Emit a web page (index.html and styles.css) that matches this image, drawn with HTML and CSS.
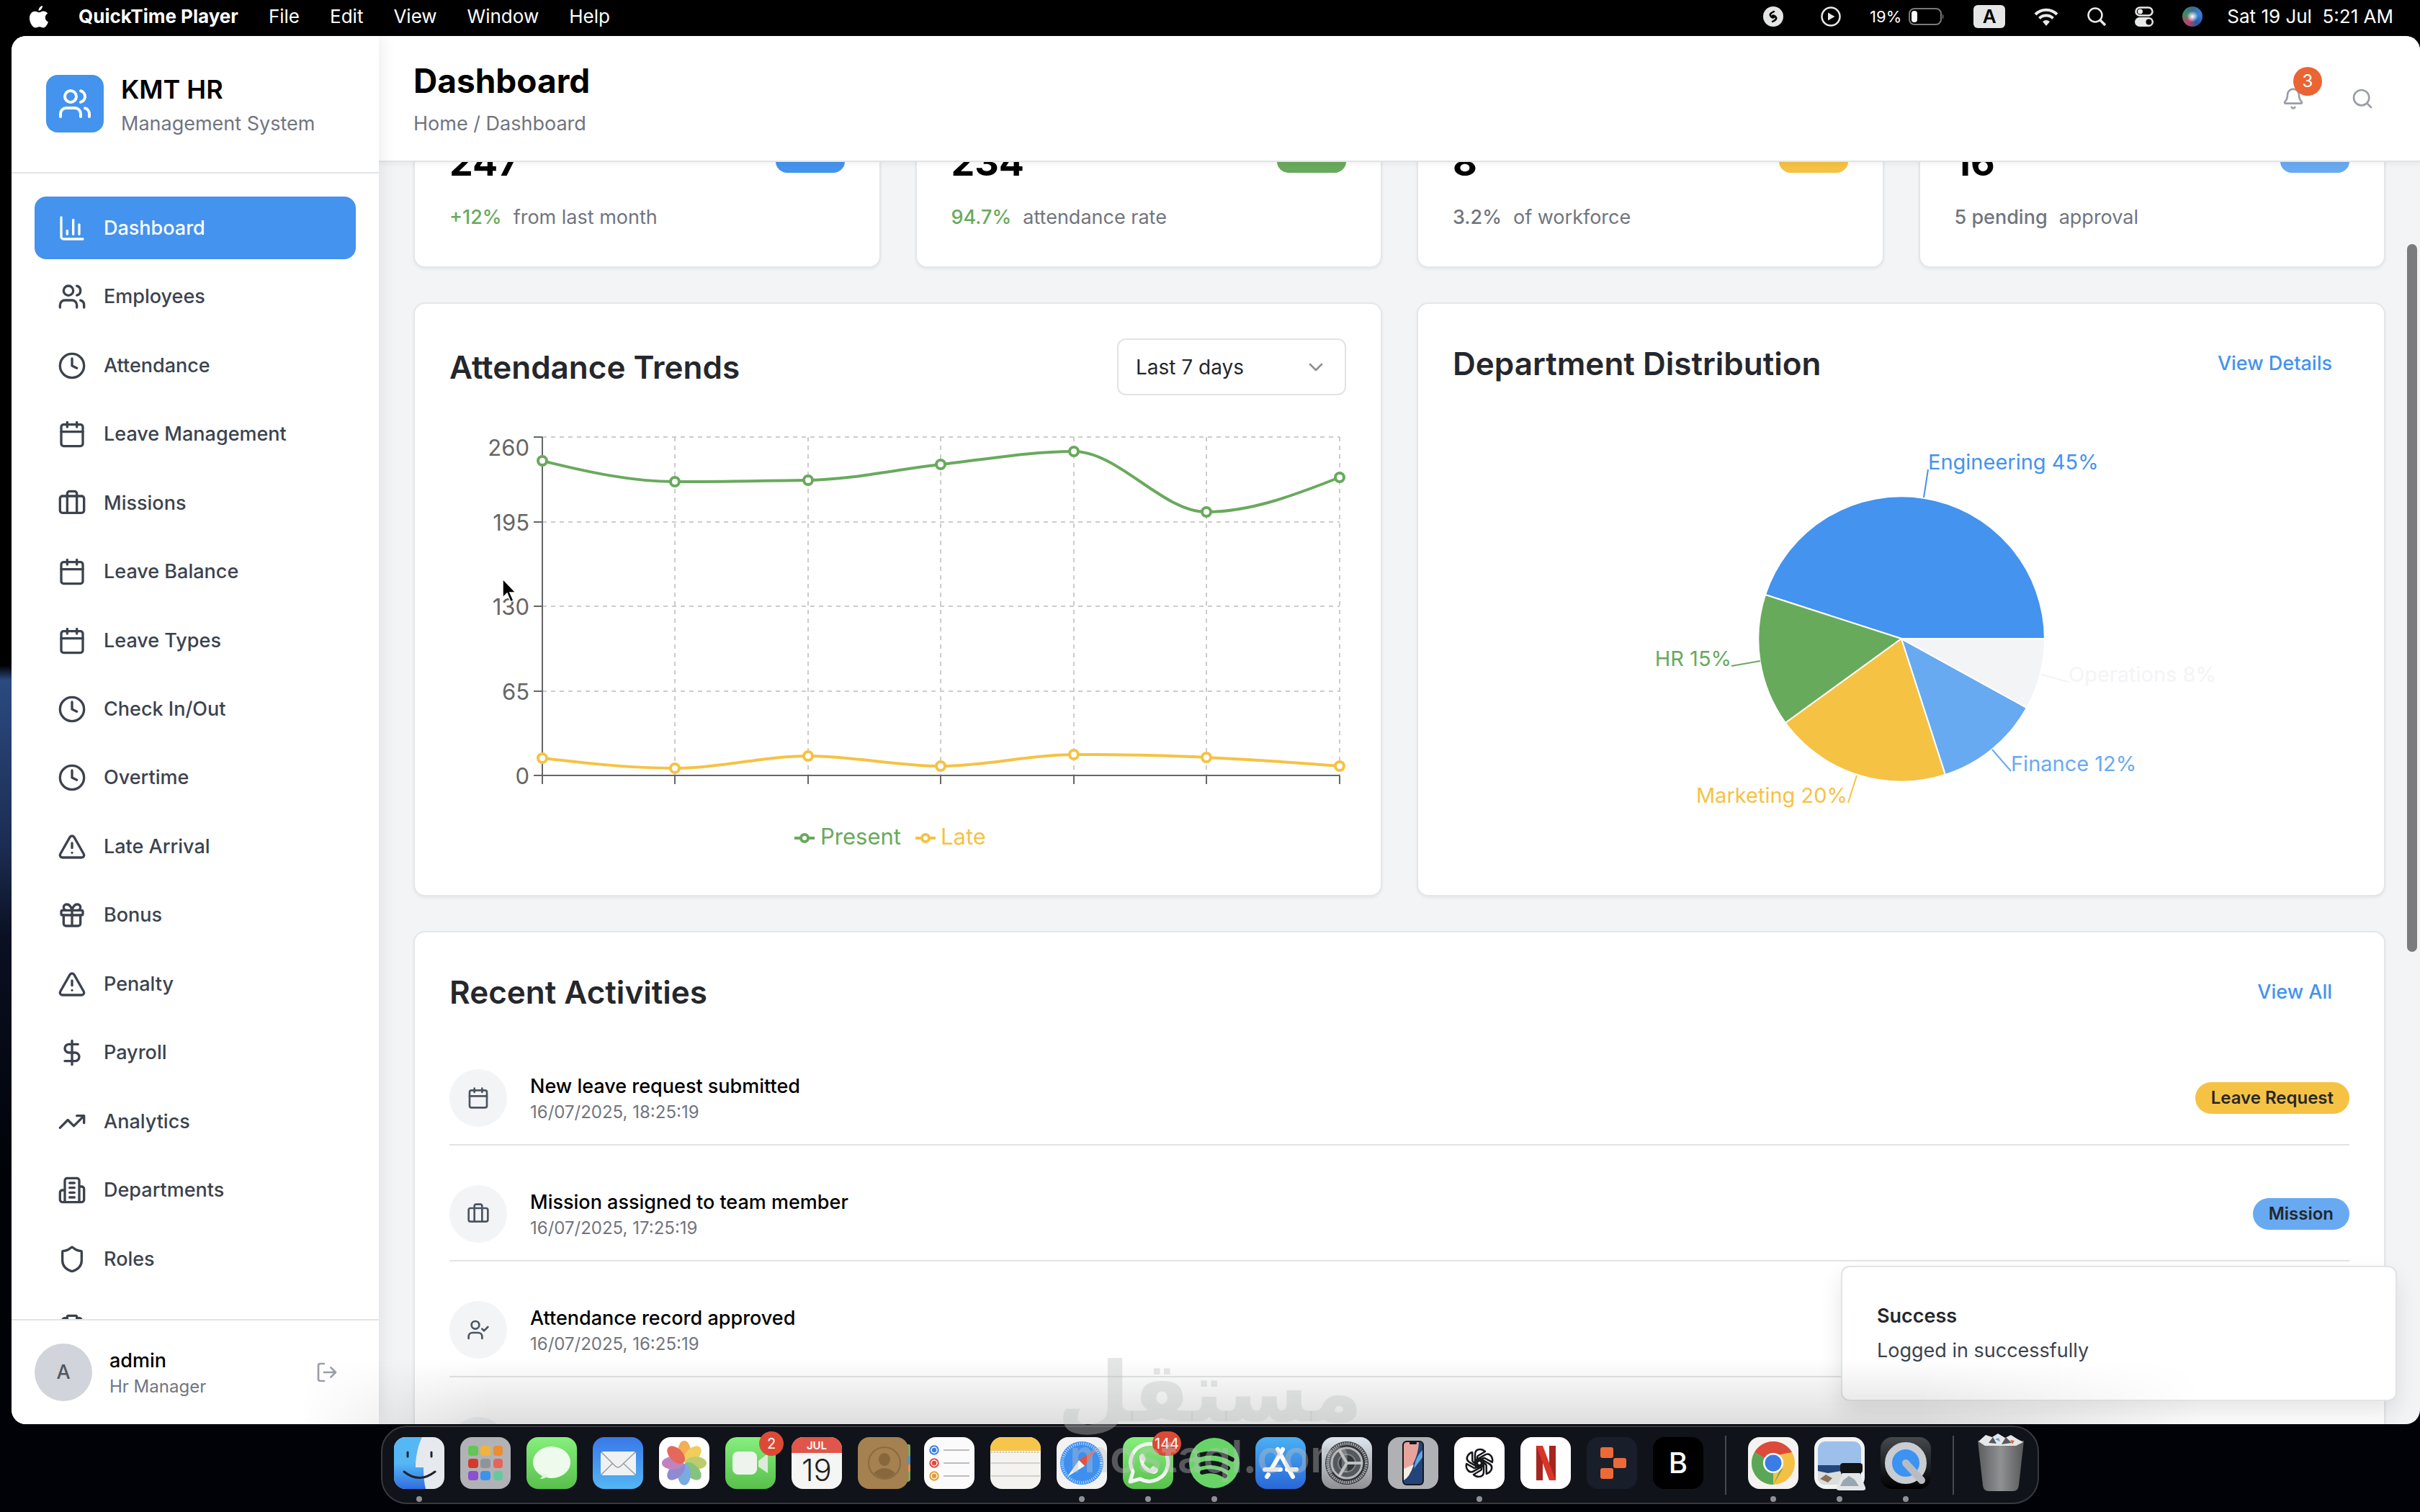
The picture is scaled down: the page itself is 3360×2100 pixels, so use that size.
FILE: index.html
```html
<!DOCTYPE html>
<html lang="en">
<head>
    <meta charset="UTF-8">
    <meta name="viewport" content="width=device-width, initial-scale=1.0">
    <title>KMT HR - Dashboard</title>
    <link rel="stylesheet" href="styles.css">
</head>
<body>
    <!-- Shared icon shapes -->
    <svg class="sprite" aria-hidden="true">
        <symbol id="i-users" viewBox="0 0 24 24"><path d="M16 21v-2a4 4 0 0 0-4-4H6a4 4 0 0 0-4 4v2"/><circle cx="9" cy="7" r="4"/><path d="M22 21v-2a4 4 0 0 0-3-3.87M16 3.13a4 4 0 0 1 0 7.75"/></symbol>
        <symbol id="i-chart" viewBox="0 0 24 24"><path d="M3 3v16a2 2 0 0 0 2 2h16M18 17V9M13 17V5M8 17v-3"/></symbol>
        <symbol id="i-clock" viewBox="0 0 24 24"><circle cx="12" cy="12" r="10"/><path d="M12 6v6l4 2"/></symbol>
        <symbol id="i-calendar" viewBox="0 0 24 24"><path d="M8 2v4M16 2v4"/><rect width="18" height="18" x="3" y="4" rx="2"/><path d="M3 10h18"/></symbol>
        <symbol id="i-luggage" viewBox="0 0 24 24"><path d="M16 20V4a2 2 0 0 0-2-2h-4a2 2 0 0 0-2 2v16"/><rect width="20" height="14" x="2" y="6" rx="2"/></symbol>
        <symbol id="i-alert" viewBox="0 0 24 24"><path d="m21.73 18-8-14a2 2 0 0 0-3.48 0l-8 14A2 2 0 0 0 4 21h16a2 2 0 0 0 1.73-3M12 9v4M12 17h.01"/></symbol>
        <symbol id="i-gift" viewBox="0 0 24 24"><rect x="3" y="8" width="18" height="4" rx="1"/><path d="M12 8v13M19 12v7a2 2 0 0 1-2 2H7a2 2 0 0 1-2-2v-7M7.5 8a2.5 2.5 0 0 1 0-5A4.800 8 0 0 1 12 8a4.800 8 0 0 1 4.500-5 2.500 2.500 0 0 1 0 5"/></symbol>
        <symbol id="i-dollar" viewBox="0 0 24 24"><path d="M12 2v20M17 5H9.500a3.500 3.500 0 0 0 0 7h5a3.500 3.500 0 0 1 0 7H6"/></symbol>
        <symbol id="i-trend" viewBox="0 0 24 24"><path d="m22 7-8.500 8.500-5-5L2 17M16 7h6v6"/></symbol>
        <symbol id="i-building" viewBox="0 0 24 24"><path d="M6 22V4a2 2 0 0 1 2-2h8a2 2 0 0 1 2 2v18ZM6 12H4a2 2 0 0 0-2 2v6a2 2 0 0 0 2 2h2M18 9h2a2 2 0 0 1 2 2v9a2 2 0 0 1-2 2h-2M10 6h4M10 10h4M10 14h4M10 18h4"/></symbol>
        <symbol id="i-shield" viewBox="0 0 24 24"><path d="M20 13c0 5-3.500 7.500-7.660 8.950a1 1 0 0 1-.670-.010C7.500 20.500 4 18 4 13V6a1 1 0 0 1 1-1c2 0 4.500-1.200 6.240-2.720a1.170 1.170 0 0 1 1.520 0C14.510 3.810 17 5 19 5a1 1 0 0 1 1 1z"/></symbol>
        <symbol id="i-clipboard" viewBox="0 0 24 24"><rect width="8" height="4" x="8" y="2" rx="1"/><path d="M16 4h2a2 2 0 0 1 2 2v14a2 2 0 0 1-2 2H6a2 2 0 0 1-2-2V6a2 2 0 0 1 2-2h2"/></symbol>
        <symbol id="i-logout" viewBox="0 0 24 24"><path d="M9 21H5a2 2 0 0 1-2-2V5a2 2 0 0 1 2-2h4M16 17l5-5-5-5M21 12H9"/></symbol>
        <symbol id="i-bell" viewBox="0 0 24 24"><path d="M10.270 21a2 2 0 0 0 3.460 0M3.260 15.330A1 1 0 0 0 4 17h16a1 1 0 0 0 .740-1.670C19.410 13.960 18 12.500 18 8A6 6 0 0 0 6 8c0 4.500-1.410 5.960-2.740 7.330"/></symbol>
        <symbol id="i-search" viewBox="0 0 24 24"><circle cx="11" cy="11" r="8"/><path d="m21 21-4.300-4.300"/></symbol>
        <symbol id="i-chevron" viewBox="0 0 24 24"><path d="m6 9 6 6 6-6"/></symbol>
        <symbol id="i-usercheck" viewBox="0 0 24 24"><path d="m16 11 2 2 4-4M16 21v-2a4 4 0 0 0-4-4H6a4 4 0 0 0-4 4v2"/><circle cx="9" cy="7" r="4"/></symbol>
    </svg>

    <header class="menubar">
        <div class="menubar-left">
            <svg width="26" height="31" viewBox="0 0 26 31" fill="#fff"><path d="M18 0c.3 3-2.300 6.800-5.400 6.900C12.300 3.800 15 .5 18 0ZM13.300 9.300C14.600 9.300 16.500 7.500 19 7.500c2.500 0 4.800 1.200 6.200 3.200-5 2.800-4.200 9.900.8 11.800-1.500 4-4 8-6.700 8-2 0-3-1.300-5.600-1.300-2.500 0-3.600 1.300-5.600 1.300C4.500 30.500 0 23.500 0 17.200 0 11 3.800 7.700 7.600 7.700c2.500 0 4.500 1.600 5.700 1.600Z"/></svg>
            <strong>QuickTime Player</strong>
            <span>File</span>
            <span>Edit</span>
            <span>View</span>
            <span>Window</span>
            <span>Help</span>
        </div>
        <div class="menubar-right">
            <svg class="shazam" width="28" height="28" viewBox="0 0 28 28"><circle cx="14" cy="14" r="14" fill="#e4e6e5"/><path d="M15 7c-4 2-7 4-4 7s5 1 4-1M13 21c4-2 7-4 4-7s-5-1-4 1" fill="none" stroke="#000" stroke-width="2.500" stroke-linecap="round"/></svg>
            <svg width="28" height="28" viewBox="0 0 28 28"><circle cx="14" cy="14" r="12.500" fill="none" stroke="#e8eae9" stroke-width="2.500"/><path d="M10 8.500v11l9.500-5.500z" fill="#e8eae9"/></svg>
            <span class="battery">19%
                <svg width="50" height="24" viewBox="0 0 50 24"><rect x="1" y="1" width="44" height="22" rx="7" fill="none" stroke="#78797c" stroke-width="2"/><rect x="4" y="4" width="8" height="16" rx="4" fill="#fff"/><path d="M47 8q3 4 0 8z" fill="#78797c"/></svg>
            </span>
            <span class="input-source">A</span>
            <svg width="34" height="25" viewBox="0 0 34 25" fill="none" stroke="#e8eae9" stroke-width="4"><path d="M2 9a21 21 0 0 1 30 0M7.500 14.500a13.500 13.500 0 0 1 19 0"/><path d="M17 25l-5-6a8 8 0 0 1 10 0z" fill="#e8eae9" stroke="none"/></svg>
            <svg width="26" height="26" viewBox="0 0 26 26" fill="none" stroke="#e8eae9" stroke-width="2.500"><circle cx="11" cy="11" r="9.500"/><path d="M18 18l7 7" stroke-width="3.500"/></svg>
            <svg width="26" height="28" viewBox="0 0 26 28"><rect x="1.500" y="1.500" width="23" height="11" rx="5.500" fill="none" stroke="#e8eae9" stroke-width="2.500"/><circle cx="7.500" cy="7" r="3.500" fill="#e8eae9"/><rect y="15" width="26" height="13" rx="6.500" fill="#e8eae9"/><circle cx="19.500" cy="21.500" r="4" fill="#000"/></svg>
            <span class="siri"></span>
            <span>Sat 19 Jul&nbsp; 5:21 AM</span>
        </div>
    </header>

    <div class="window">
        <aside class="sidebar">
            <div class="brand">
                <div class="brand-logo"><svg class="icon"><use href="#i-users"/></svg></div>
                <div>
                    <div class="brand-name">KMT HR</div>
                    <div class="muted">Management System</div>
                </div>
            </div>
            <nav>
                <ul>
                    <li><a class="active" href="#"><svg class="icon"><use href="#i-chart"/></svg>Dashboard</a></li>
                    <li><a href="#"><svg class="icon"><use href="#i-users"/></svg>Employees</a></li>
                    <li><a href="#"><svg class="icon"><use href="#i-clock"/></svg>Attendance</a></li>
                    <li><a href="#"><svg class="icon"><use href="#i-calendar"/></svg>Leave Management</a></li>
                    <li><a href="#"><svg class="icon"><use href="#i-luggage"/></svg>Missions</a></li>
                    <li><a href="#"><svg class="icon"><use href="#i-calendar"/></svg>Leave Balance</a></li>
                    <li><a href="#"><svg class="icon"><use href="#i-calendar"/></svg>Leave Types</a></li>
                    <li><a href="#"><svg class="icon"><use href="#i-clock"/></svg>Check In/Out</a></li>
                    <li><a href="#"><svg class="icon"><use href="#i-clock"/></svg>Overtime</a></li>
                    <li><a href="#"><svg class="icon"><use href="#i-alert"/></svg>Late Arrival</a></li>
                    <li><a href="#"><svg class="icon"><use href="#i-gift"/></svg>Bonus</a></li>
                    <li><a href="#"><svg class="icon"><use href="#i-alert"/></svg>Penalty</a></li>
                    <li><a href="#"><svg class="icon"><use href="#i-dollar"/></svg>Payroll</a></li>
                    <li><a href="#"><svg class="icon"><use href="#i-trend"/></svg>Analytics</a></li>
                    <li><a href="#"><svg class="icon"><use href="#i-building"/></svg>Departments</a></li>
                    <li><a href="#"><svg class="icon"><use href="#i-shield"/></svg>Roles</a></li>
                    <li><a href="#"><svg class="icon"><use href="#i-clipboard"/></svg></a></li>
                </ul>
            </nav>
            <div class="user">
                <div class="avatar">A</div>
                <div class="user-info">
                    <div class="user-name">admin</div>
                    <div class="small muted">Hr Manager</div>
                </div>
                <button class="icon-btn" aria-label="Log out"><svg class="icon icon-sm"><use href="#i-logout"/></svg></button>
            </div>
        </aside>

        <main>
            <div class="topbar">
                <div>
                    <h1>Dashboard</h1>
                    <div class="muted">Home / Dashboard</div>
                </div>
                <div class="topbar-actions">
                    <button class="icon-btn" aria-label="Notifications"><svg class="icon icon-sm"><use href="#i-bell"/></svg><span class="count">3</span></button>
                    <button class="icon-btn" aria-label="Search"><svg class="icon icon-sm"><use href="#i-search"/></svg></button>
                </div>
            </div>

            <div class="scroll-area">
                <div class="content">
                    <section class="stats">
                        <div class="card">
                            <div class="stat-top"><span class="stat-value">247</span><span class="stat-icon blue"></span></div>
                            <div class="stat-note"><b class="green-text">+12%</b><span>from last month</span></div>
                        </div>
                        <div class="card">
                            <div class="stat-top"><span class="stat-value">234</span><span class="stat-icon green"></span></div>
                            <div class="stat-note"><b class="green-text">94.7%</b><span>attendance rate</span></div>
                        </div>
                        <div class="card">
                            <div class="stat-top"><span class="stat-value">8</span><span class="stat-icon yellow"></span></div>
                            <div class="stat-note"><b>3.2%</b><span>of workforce</span></div>
                        </div>
                        <div class="card">
                            <div class="stat-top"><span class="stat-value">16</span><span class="stat-icon sky"></span></div>
                            <div class="stat-note"><b>5 pending</b><span>approval</span></div>
                        </div>
                    </section>

                    <section class="charts">
                        <div class="card">
                            <div class="card-head">
                                <h2>Attendance Trends</h2>
                                <div class="select-wrap">
                                    <select aria-label="Period"><option>Last 7 days</option></select>
                                    <svg class="icon icon-sm"><use href="#i-chevron"/></svg>
                                </div>
                            </div>
                            <svg class="chart" viewBox="0 0 1245 598">
                                <g stroke="#ccc" stroke-width="2" stroke-dasharray="6 6">
                                    <path d="M129 10H1236M129 128H1236M129 245H1236M129 363H1236"/>
                                    <path d="M313 10V480M498 10V480M682 10V480M867 10V480M1051 10V480M1236 10V480"/>
                                </g>
                                <path d="M129 10V480H1236M117 10h12M117 128h12M117 245h12M117 363h12M117 480h12M129 480v12M313 480v12M498 480v12M682 480v12M867 480v12M1051 480v12M1236 480v12" fill="none" stroke="#666" stroke-width="2"/>
                                <g class="axis-labels">
                                    <text x="111" y="36">260</text>
                                    <text x="111" y="140">195</text>
                                    <text x="111" y="257">130</text>
                                    <text x="111" y="375">65</text>
                                    <text x="111" y="492">0</text>
                                </g>
                                <g fill="none" stroke="#68aa5c" stroke-width="4">
                                    <path d="M129 43C190 58 252 72 313 72C375 72 436 71 498 70C559 69 621 55 682 48C744 41 806 30 867 30C929 30 990 114 1051 114C1113 114 1175 90 1236 66"/>
                                    <g fill="#fff"><circle cx="129" cy="43" r="6"/><circle cx="313" cy="72" r="6"/><circle cx="498" cy="70" r="6"/><circle cx="682" cy="48" r="6"/><circle cx="867" cy="30" r="6"/><circle cx="1051" cy="114" r="6"/><circle cx="1236" cy="66" r="6"/></g>
                                    <path d="M479 567h28"/><circle cx="493" cy="567" r="5" fill="#fff"/>
                                </g>
                                <g fill="none" stroke="#f6c244" stroke-width="4">
                                    <path d="M129 456C190 463 252 470 313 470C375 470 436 453 498 453C559 453 621 467 682 467C744 467 806 451 867 451C929 451 990 452 1051 455C1113 458 1175 462 1236 467"/>
                                    <g fill="#fff"><circle cx="129" cy="456" r="6"/><circle cx="313" cy="470" r="6"/><circle cx="498" cy="453" r="6"/><circle cx="682" cy="467" r="6"/><circle cx="867" cy="451" r="6"/><circle cx="1051" cy="455" r="6"/><circle cx="1236" cy="467" r="6"/></g>
                                    <path d="M647 567h28"/><circle cx="661" cy="567" r="5" fill="#fff"/>
                                </g>
                                <text x="515" y="576" fill="#68aa5c">Present</text>
                                <text x="682" y="576" fill="#f6c244">Late</text>
                            </svg>
                        </div>

                        <div class="card">
                            <div class="card-head">
                                <h2>Department Distribution</h2>
                                <button class="link-btn">View Details</button>
                            </div>
                            <svg class="chart pie" viewBox="0 0 1245 598">
                                <g stroke="#fff" stroke-width="2" stroke-linejoin="round">
                                    <path d="M623 299L822 299A199 199 0 0 0 434 238Z" fill="#4493ee"/>
                                    <path d="M623 299L434 238A199 199 0 0 0 462 416Z" fill="#68aa5c"/>
                                    <path d="M623 299L462 416A199 199 0 0 0 684 488Z" fill="#f6c244"/>
                                    <path d="M623 299L684 488A199 199 0 0 0 797 395Z" fill="#68aaf1"/>
                                    <path d="M623 299L797 395A199 199 0 0 0 822 299Z" fill="#f3f4f6"/>
                                </g>
                                <g fill="none" stroke-width="2">
                                    <path d="M654 103L660 64" stroke="#4493ee"/>
                                    <path d="M427 330L387 337" stroke="#68aa5c"/>
                                    <path d="M561 489L549 527" stroke="#f6c244"/>
                                    <path d="M749 453L775 483" stroke="#68aaf1"/>
                                    <path d="M817 349L855 359" stroke="#f3f4f6"/>
                                </g>
                                <text x="660" y="64" fill="#4493ee">Engineering 45%</text>
                                <text x="387" y="337" fill="#68aa5c" text-anchor="end">HR 15%</text>
                                <text x="548" y="527" fill="#f6c244" text-anchor="end">Marketing 20%</text>
                                <text x="775" y="483" fill="#68aaf1">Finance 12%</text>
                                <text x="855" y="359" fill="#f3f4f6">Operations 8%</text>
                            </svg>
                        </div>
                    </section>

                    <section class="card">
                        <div class="card-head">
                            <h2>Recent Activities</h2>
                            <button class="link-btn">View All</button>
                        </div>
                        <ul class="activities">
                            <li>
                                <span class="activity-icon"><svg class="icon icon-sm"><use href="#i-calendar"/></svg></span>
                                <div><div class="activity-title">New leave request submitted</div><div class="small muted">16/07/2025, 18:25:19</div></div>
                                <span class="tag yellow">Leave Request</span>
                            </li>
                            <li>
                                <span class="activity-icon"><svg class="icon icon-sm"><use href="#i-luggage"/></svg></span>
                                <div><div class="activity-title">Mission assigned to team member</div><div class="small muted">16/07/2025, 17:25:19</div></div>
                                <span class="tag sky">Mission</span>
                            </li>
                            <li>
                                <span class="activity-icon"><svg class="icon icon-sm"><use href="#i-usercheck"/></svg></span>
                                <div><div class="activity-title">Attendance record approved</div><div class="small muted">16/07/2025, 16:25:19</div></div>
                            </li>
                            <li>
                                <span class="activity-icon"></span>
                            </li>
                        </ul>
                    </section>
                </div>
            </div>
        </main>

        <span class="scroll-thumb"></span>
        <div class="toast" role="status">
            <div class="toast-title">Success</div>
            <div>Logged in successfully</div>
        </div>
        <div class="dock-shade"></div>
    </div>

    <footer class="dock-area">
        <div class="dock">
            <!-- Finder -->
            <span class="app running"><svg viewBox="0 0 70 72"><defs><linearGradient id="g-finder" x2="0" y2="1"><stop offset=".5" stop-color="#55b8f5"/><stop offset="1" stop-color="#2f6de0"/></linearGradient><clipPath id="c-app"><rect width="70" height="72" rx="16"/></clipPath></defs><g clip-path="url(#c-app)"><rect width="70" height="72" fill="#e6e9ee"/><path d="M0 0h39c-6 12-9 28-9 42h11c0 12 1 22 3 30H0z" fill="url(#g-finder)"/></g><path d="M19 21v6M52 21v6M14 48q21 17 43 0" fill="none" stroke="#1d2430" stroke-width="3" stroke-linecap="round"/></svg></span>
            <!-- Launchpad -->
            <span class="app"><svg viewBox="0 0 70 72"><rect width="70" height="72" rx="16" fill="#b1b2b6"/><g><rect x="11" y="12" width="14" height="14" rx="4" fill="#62c654"/><rect x="28" y="12" width="14" height="14" rx="4" fill="#f2b33c"/><rect x="46" y="12" width="13" height="14" rx="4" fill="#ee8c32"/><rect x="11" y="30" width="14" height="13" rx="4" fill="#d43a2b"/><rect x="28" y="30" width="14" height="13" rx="4" fill="#8f9499"/><rect x="46" y="30" width="13" height="13" rx="4" fill="#e5645a"/><rect x="11" y="47" width="14" height="13" rx="4" fill="#8c4fd0"/><rect x="28" y="47" width="14" height="13" rx="4" fill="#3a94ec"/><rect x="46" y="47" width="13" height="13" rx="4" fill="#66c99b"/></g></svg></span>
            <!-- Messages -->
            <span class="app"><svg viewBox="0 0 70 72"><defs><linearGradient id="g-green" x2="0" y2="1"><stop stop-color="#86ef7d"/><stop offset="1" stop-color="#58c04b"/></linearGradient></defs><rect width="70" height="72" rx="16" fill="url(#g-green)"/><ellipse cx="35" cy="35" rx="26" ry="22" fill="#eefaec"/><path d="M22 50q1 6-4 8 8 0 13-5z" fill="#e2f5df"/></svg></span>
            <!-- Mail -->
            <span class="app"><svg viewBox="0 0 70 72"><defs><linearGradient id="g-mail" x2="0" y2="1"><stop stop-color="#3a78e8"/><stop offset="1" stop-color="#54b6f4"/></linearGradient></defs><rect width="70" height="72" rx="16" fill="url(#g-mail)"/><rect x="11" y="20" width="49" height="33" rx="4" fill="#f0f1f2"/><path d="M12 21l19 19q4 4 8 0l20-19M12 52l15-15M59 52L43 37" fill="none" stroke="#9a9da1" stroke-width="1.500"/></svg></span>
            <!-- Photos -->
            <span class="app"><svg viewBox="0 0 70 72"><rect width="70" height="72" rx="16" fill="#fff"/><g opacity=".86"><ellipse cx="35" cy="20" rx="9" ry="15" fill="#f0a33a"/><ellipse cx="35" cy="20" rx="9" ry="15" fill="#efc542" transform="rotate(45 35 36)"/><ellipse cx="35" cy="20" rx="9" ry="15" fill="#b3c455" transform="rotate(90 35 36)"/><ellipse cx="35" cy="20" rx="9" ry="15" fill="#74b867" transform="rotate(135 35 36)"/><ellipse cx="35" cy="20" rx="9" ry="15" fill="#639fdc" transform="rotate(180 35 36)"/><ellipse cx="35" cy="20" rx="9" ry="15" fill="#7e77c9" transform="rotate(225 35 36)"/><ellipse cx="35" cy="20" rx="9" ry="15" fill="#b66fb4" transform="rotate(270 35 36)"/><ellipse cx="35" cy="20" rx="9" ry="15" fill="#e1503f" transform="rotate(315 35 36)"/></g></svg></span>
            <!-- FaceTime -->
            <span class="app"><svg viewBox="0 0 70 72"><rect width="70" height="72" rx="16" fill="url(#g-green)"/><rect x="10" y="20" width="34" height="32" rx="8" fill="#eef4ed"/><path d="M46 33l13-10v27L46 41z" fill="#dcebd9"/></svg><span class="app-badge">2</span></span>
            <!-- Calendar -->
            <span class="app"><svg viewBox="0 0 70 72"><g clip-path="url(#c-app)"><rect width="70" height="72" fill="#f5f5f3"/><rect width="70" height="22" fill="#e0564a"/></g><text x="35" y="17" class="cal-month">JUL</text><text x="35" y="61" class="cal-day">19</text></svg></span>
            <!-- Contacts -->
            <span class="app"><svg viewBox="0 0 70 72"><path d="M60 10h11q2 0 2 3v45q0 4-4 4h-9z" fill="#7fa85c"/><path d="M60 26h13v12H60z" fill="#4b93d8"/><path d="M60 38h13v10H60z" fill="#e5923a"/><rect width="70" height="72" rx="16" fill="#a58050"/><circle cx="37" cy="36" r="22" fill="none" stroke="#8b6a3e" stroke-width="2"/><ellipse cx="37" cy="31" rx="8" ry="9" fill="#87673c"/><path d="M22 50q15-14 30 0-15 14-30 0" fill="#87673c"/></svg></span>
            <!-- Reminders -->
            <span class="app"><svg viewBox="0 0 70 72"><rect width="70" height="72" rx="16" fill="#fbfbfb"/><g stroke-width="1.500"><circle cx="14" cy="18" r="6" fill="#3a7de8" stroke="#3a7de8"/><circle cx="14" cy="36" r="6" fill="#e2483d" stroke="#e2483d"/><circle cx="14" cy="54" r="6" fill="#e79a34" stroke="#e79a34"/></g><g fill="none" stroke="#fff" stroke-width="1.500"><circle cx="14" cy="18" r="4"/><circle cx="14" cy="36" r="4"/><circle cx="14" cy="54" r="4"/></g><path d="M27 18h36M27 36h36M27 54h36" stroke="#bdbdbf" stroke-width="2"/></svg></span>
            <!-- Notes -->
            <span class="app"><svg viewBox="0 0 70 72"><g clip-path="url(#c-app)"><rect width="70" height="72" fill="#f4f3ef"/><rect width="70" height="19" fill="#f5c64b"/></g><path d="M1 21h68" stroke="#c9c5b8" stroke-width="2" stroke-dasharray="2 2"/><path d="M1 36h68M1 54h68" stroke="#d2d1cd" stroke-width="2"/></svg></span>
            <!-- Safari -->
            <span class="app running"><svg viewBox="0 0 70 72"><rect width="70" height="72" rx="16" fill="#f2f2f3"/><circle cx="35" cy="36" r="30" fill="#3d8ff0"/><circle cx="35" cy="36" r="27" fill="none" stroke="#cfe4fb" stroke-width="4" stroke-dasharray="1 2"/><path d="M55 17L31 32l8 8z" fill="#e5523d"/><path d="M15 55l16-23 8 8z" fill="#f5f5f5"/></svg></span>
            <!-- WhatsApp -->
            <span class="app running"><svg viewBox="0 0 70 72"><rect width="70" height="72" rx="16" fill="url(#g-green)"/><path d="M10 62l4-14a26 26 0 1 1 10 10z" fill="none" stroke="#f4f6f4" stroke-width="5" stroke-linejoin="round"/><path d="M23 26q3-5 6-2l3 7-3 5q3 6 9 8l4-4 7 4q0 6-6 7-20-3-20-25" fill="#f4f6f4"/></svg><span class="app-badge">144</span></span>
            <!-- Spotify -->
            <span class="app running"><svg viewBox="0 0 70 72"><circle cx="35" cy="36" r="35" fill="#68d468"/><path d="M14 25q24-7 46 6M16 38q20-6 38 5M18 49q17-5 32 5" fill="none" stroke="#15171b" stroke-width="6" stroke-linecap="round"/></svg></span>
            <!-- App Store -->
            <span class="app"><svg viewBox="0 0 70 72"><defs><linearGradient id="g-store" x2="0" y2="1"><stop stop-color="#4bb0f3"/><stop offset="1" stop-color="#2a67d8"/></linearGradient></defs><rect width="70" height="72" rx="16" fill="url(#g-store)"/><path d="M31 17l21 38M38 17L22 45M13 45h22M44 45h13M18 52l-2 3" fill="none" stroke="#fff" stroke-width="6" stroke-linecap="round"/></svg></span>
            <!-- Settings -->
            <span class="app"><svg viewBox="0 0 70 72"><defs><linearGradient id="g-set" x2="0" y2="1"><stop stop-color="#dde6ee"/><stop offset="1" stop-color="#8f8f93"/></linearGradient></defs><rect width="70" height="72" rx="16" fill="url(#g-set)"/><circle cx="35" cy="36" r="30" fill="#2f3236"/><circle cx="35" cy="36" r="27" fill="none" stroke="#9da0a4" stroke-width="4" stroke-dasharray="2 1"/><circle cx="35" cy="36" r="21" fill="#55585c" stroke="#b4b6b9" stroke-width="3"/><circle cx="35" cy="36" r="12" fill="#33363a" stroke="#7e8185" stroke-width="2"/><path d="M35 36h22M35 36L24 17M35 36L24 55" stroke="#bfc1c4" stroke-width="4"/></svg></span>
            <!-- iPhone Mirroring -->
            <span class="app"><svg viewBox="0 0 70 72"><rect width="70" height="72" rx="16" fill="#b0b1b5"/><rect x="20" y="5" width="30" height="62" rx="6" fill="#16181d"/><rect x="22" y="7" width="26" height="58" rx="4" fill="#234478"/><path d="M22 12q0-5 5-5h16q-1 26-21 50z" fill="#e8a39c"/><path d="M48 18Q38 28 36 44L48 28z" fill="#5fa6ea"/><path d="M22 44l14-6q-6 18-14 22z" fill="#f6efe6"/><rect x="30" y="7" width="10" height="3" rx="1" fill="#16181d"/></svg></span>
            <!-- ChatGPT -->
            <span class="app running"><svg viewBox="0 0 70 72"><rect width="70" height="72" rx="16" fill="#fff"/><g fill="none" stroke="#15171a" stroke-width="2.500" stroke-linejoin="round"><path id="petal" d="M29 39V24q0-7 7-7 4 0 7 3L33 26q-1 1-1 2v12"/><use href="#petal" transform="rotate(60 35 36)"/><use href="#petal" transform="rotate(120 35 36)"/><use href="#petal" transform="rotate(180 35 36)"/><use href="#petal" transform="rotate(240 35 36)"/><use href="#petal" transform="rotate(300 35 36)"/></g></svg></span>
            <!-- Netflix -->
            <span class="app"><svg viewBox="0 0 70 72"><rect width="70" height="72" rx="16" fill="#fff"/><rect x="22" y="12" width="9" height="48" fill="#a5261f"/><rect x="40" y="12" width="9" height="48" fill="#a5261f"/><path d="M22 12h9l18 48h-9z" fill="#d8352b"/></svg></span>
            <!-- Replit -->
            <span class="app"><svg viewBox="0 0 70 72"><rect width="70" height="72" rx="16" fill="#191e2b"/><g fill="#ec6a37"><rect x="19" y="14" width="18" height="15" rx="3"/><rect x="37" y="29" width="18" height="14" rx="3"/><rect x="19" y="43" width="18" height="15" rx="3"/></g></svg></span>
            <span class="app letter-app">B</span>
            <span class="dock-sep"></span>
            <!-- Chrome -->
            <span class="app running"><svg viewBox="0 0 70 72"><rect width="70" height="72" rx="16" fill="#f4f3f1"/><circle cx="35" cy="36" r="30" fill="#f4c145"/><path d="M35 36L9 21a30 30 0 0 1 52 0H35z" fill="#dc4a3c"/><path d="M35 36L9 21a30 30 0 0 0 26 45l13-22z" fill="#5aa757"/><path d="M35 36h14l-14 30z" fill="#f4c145"/><path d="M35 21h26L35 26z" fill="#dc4a3c"/><circle cx="35" cy="36" r="14" fill="#fff"/><circle cx="35" cy="36" r="11.500" fill="#3b7de6"/></svg></span>
            <!-- Preview -->
            <span class="app running"><svg viewBox="0 0 70 72"><rect width="70" height="72" rx="16" fill="#f3f3f3"/><rect x="5" y="6" width="60" height="60" rx="10" fill="#9dc0ea"/><path d="M5 39h60v12H5z" fill="#23477c"/><path d="M5 47l14 3 18-3v19H15Q5 66 5 56z" fill="#d9dedd"/><path d="M8 58l8-6 9 5-6 6z" fill="#8b6f55"/><path d="M39 50h24l8 20q1 4-4 4H35q-5 0-4-4z" fill="#e3e6e8"/><path d="M40 60l8-6 8 5 6 9H36z" fill="#9aa6b0"/><rect x="36" y="36" width="31" height="14" rx="4" fill="#131416"/></svg></span>
            <!-- QuickTime -->
            <span class="app running"><svg viewBox="0 0 70 72"><defs><linearGradient id="g-qt" x2="0" y2="1"><stop stop-color="#45494e"/><stop offset="1" stop-color="#000"/></linearGradient></defs><rect width="70" height="72" rx="16" fill="url(#g-qt)"/><circle cx="35" cy="36" r="24" fill="#3c93f2" stroke="#c9cdd2" stroke-width="10"/><path d="M35 36l22 24" stroke="#b8bcc2" stroke-width="10" stroke-linecap="round"/></svg></span>
            <span class="dock-sep"></span>
            <!-- Trash -->
            <span class="app trash"><svg viewBox="0 0 70 82"><defs><linearGradient id="g-trash"><stop stop-color="#5c5e60"/><stop offset=".5" stop-color="#8f9193"/><stop offset="1" stop-color="#56585a"/></linearGradient></defs><path d="M3 11h64l-7 62q-1 8-8 8H18q-7 0-8-8z" fill="url(#g-trash)"/><path d="M4 12L14 3l9 3 8-5 10 6 8-4 8 5 9 5-10 5H13z" fill="#e6e7e8"/><path d="M18 14l6-8 5 9zM36 16l6-10 8 8z" fill="#55585c"/><path d="M27 9l5-2 2 5z" fill="#5aa5d8"/><path d="M48 10l6 1-3 5z" fill="#d2703a"/></svg></span>
        </div>
    </footer>

    <div class="watermark"><span lang="ar">مستقل</span><small>mostaql.com</small></div>
    <svg class="pointer" viewBox="0 0 20 34"><path d="M1 1v26l6-6 5 12 4-2-5-11h8z" fill="#000" stroke="#fff" stroke-width="1.500"/></svg>
</body>
</html>
```

FILE: styles.css
```css
* {
    box-sizing: border-box;
}

/* Desktop behind the window */
body {
    margin: 0;
    height: 100vh;
    display: flex;
    flex-direction: column;
    overflow: hidden;
    position: relative;
    background: linear-gradient(#000 44%, #2b4a80 45%, #1c2c52 56%, #0a1022 62%, #000208 78%);
    font-family: Inter, "Liberation Sans", sans-serif;
    font-size: 27px;
    line-height: 40px;
    color: #000;
}

h1, h2, ul {
    margin: 0;
    padding: 0;
}

ul {
    list-style: none;
}

button, select {
    font: inherit;
}

.sprite {
    position: absolute;
    width: 0;
    height: 0;
}

.icon {
    width: 40px;
    height: 40px;
    flex: none;
    fill: none;
    stroke: currentColor;
    stroke-width: 2;
    stroke-linecap: round;
    stroke-linejoin: round;
}

.icon-sm {
    width: 32px;
    height: 32px;
}

.muted {
    color: #71757f;
}

.small {
    font-size: 24px;
    line-height: 32px;
}

.blue { background: #4493ee; }
.green { background: #68aa5c; }
.yellow { background: #f6c244; }
.sky { background: #68aaf1; }

/* Menu bar */
.menubar {
    height: 50px;
    flex: none;
    display: flex;
    justify-content: space-between;
    align-items: center;
    padding: 0 37px 4px 41px;
    background: #000;
    color: #fff;
    font-size: 26px;
}

.menubar-left, .menubar-right {
    display: flex;
    align-items: center;
    gap: 40px;
}

.menubar-left {
    gap: 42px;
}

.shazam {
    margin-right: 12px;
}

.battery {
    display: flex;
    align-items: center;
    gap: 10px;
    font-size: 22px;
}

.input-source {
    width: 44px;
    height: 32px;
    border-radius: 6px;
    background: #e4e6e5;
    color: #000;
    font-weight: 600;
    line-height: 32px;
    text-align: center;
}

.siri {
    width: 28px;
    height: 28px;
    margin-right: -6px;
    border-radius: 50%;
    background: radial-gradient(circle, #fff, transparent 40%), conic-gradient(#3f6d8a, #3b7fe0, #245a9c, #c33f6a, #3f8a68, #3f6d8a);
}

/* App window */
.window {
    flex: 1;
    min-height: 0;
    margin-left: 16px;
    display: flex;
    position: relative;
    overflow: hidden;
    border-radius: 20px;
    background: #f3f4f6;
}

.sidebar {
    width: 510px;
    flex: none;
    display: flex;
    flex-direction: column;
    background: #fff;
    box-shadow: 0 0 24px rgba(0, 0, 0, 0.1);
    z-index: 2;
}

.brand {
    display: flex;
    align-items: center;
    gap: 24px;
    padding: 46px 48px 47px;
    border-bottom: 2px solid #e2e3e5;
}

.brand-logo {
    width: 80px;
    height: 80px;
    border-radius: 16px;
    display: flex;
    align-items: center;
    justify-content: center;
    background: #4493ee;
    color: #fff;
}

.brand-logo .icon {
    width: 48px;
    height: 48px;
}

.brand-name {
    font-size: 36px;
    line-height: 56px;
    font-weight: 600;
}

nav {
    flex: 1;
    min-height: 0;
    display: flex;
    flex-direction: column;
    padding: 32px 32px 0;
    overflow: hidden;
}

/* the list runs on below the fold */
nav ul {
    flex: 1;
    display: flex;
    flex-direction: column;
    gap: 8px;
    margin-bottom: -56px;
}

nav li {
    flex: 1;
    display: flex;
}

nav a {
    flex: 1;
    display: flex;
    align-items: center;
    gap: 24px;
    padding: 0 32px;
    border-radius: 16px;
    color: #3c434e;
    font-weight: 500;
    text-decoration: none;
}

nav a.active {
    background: #4493ee;
    color: #fff;
}

.user {
    display: flex;
    align-items: center;
    gap: 24px;
    padding: 32px;
    border-top: 2px solid #e2e3e5;
}

.avatar {
    width: 80px;
    height: 80px;
    border-radius: 50%;
    background: #d1d4da;
    color: #52565e;
    font-weight: 500;
    line-height: 80px;
    text-align: center;
}

.user-info {
    flex: 1;
}

.user-name {
    font-weight: 500;
}

.icon-btn {
    position: relative;
    display: flex;
    padding: 0 24px;
    border: 0;
    background: none;
    color: #9a9ea7;
}

main {
    flex: 1;
    min-width: 0;
    display: flex;
    flex-direction: column;
}

.topbar {
    display: flex;
    justify-content: space-between;
    align-items: center;
    padding: 32px 40px 31px 48px;
    background: #fff;
    border-bottom: 2px solid #e2e3e5;
    box-shadow: 0 2px 8px rgba(0, 0, 0, 0.06);
    z-index: 1;
}

h1 {
    font-size: 46px;
    line-height: 60px;
    font-weight: 700;
    margin-bottom: 10px;
}

.topbar-actions {
    display: flex;
    gap: 16px;
}

.count {
    position: absolute;
    top: -28px;
    right: 0;
    width: 40px;
    height: 40px;
    border-radius: 50%;
    background: #eb6434;
    color: #fff;
    font-size: 24px;
}

.scroll-area {
    flex: 1;
    min-height: 0;
    overflow: hidden;
}

/* content is scrolled part of the way down */
.content {
    margin-top: -149px;
    padding: 0 48px;
    display: flex;
    flex-direction: column;
    gap: 48px;
}

.stats {
    display: grid;
    grid-template-columns: repeat(4, 1fr);
    gap: 48px;
}

.charts {
    display: grid;
    grid-template-columns: repeat(2, 1fr);
    gap: 48px;
}

.card {
    padding: 48px;
    border: 2px solid #e4e6e9;
    border-radius: 16px;
    background: #fff;
    box-shadow: 0 2px 4px rgba(0, 0, 0, 0.06);
}

.stat-top {
    display: flex;
    justify-content: space-between;
    align-items: center;
    margin-bottom: 24px;
}

.stat-value {
    margin-top: 68px;
    font-size: 52px;
    line-height: 64px;
    font-weight: 700;
}

.stat-icon {
    width: 96px;
    height: 96px;
    border-radius: 16px;
}

.stat-note {
    display: flex;
    gap: 16px;
    color: #71757f;
}

.stat-note b {
    font-weight: 500;
}

.stat-note .green-text {
    color: #68aa5c;
}

.card-head {
    min-height: 70px;
    display: flex;
    justify-content: space-between;
    align-items: center;
    margin-bottom: 48px;
}

h2 {
    font-size: 44px;
    line-height: 48px;
    font-weight: 600;
    color: #25272c;
}

.select-wrap {
    position: relative;
    width: 318px;
}

.select-wrap select {
    display: block;
    width: 100%;
    height: 79px;
    padding: 0 24px;
    border: 2px solid #e2e3e5;
    border-radius: 12px;
    background: #fff;
    color: #25272c;
    font-size: 28px;
    appearance: none;
}

.select-wrap .icon {
    position: absolute;
    top: 24px;
    right: 26px;
    color: #8d9095;
}

.link-btn {
    padding: 0 24px;
    border: 0;
    background: none;
    color: #4493ee;
    font-weight: 500;
}

.chart {
    display: block;
    width: 100%;
    font-size: 31px;
}

.pie {
    font-size: 29px;
}

.axis-labels {
    fill: #666;
    text-anchor: end;
}

/* Recent activities */
.activities {
    display: flex;
    flex-direction: column;
    gap: 31px;
}

.activities li {
    display: flex;
    align-items: center;
    gap: 32px;
    padding: 24px 0;
    border-bottom: 2px solid #e2e3e5;
}

.activity-icon {
    width: 80px;
    height: 80px;
    border-radius: 50%;
    display: flex;
    align-items: center;
    justify-content: center;
    background: #f3f4f6;
    color: #4b5563;
}

.activity-title {
    font-weight: 500;
}

.tag {
    margin-left: auto;
    padding: 0 22px;
    border-radius: 22px;
    color: #25272c;
    font-size: 24px;
    line-height: 44px;
    font-weight: 600;
}

.scroll-thumb {
    position: absolute;
    top: 15%;
    right: 4px;
    width: 14px;
    height: 51%;
    border-radius: 7px;
    background: #7b7c7e;
    z-index: 2;
}

.toast {
    position: absolute;
    right: 32px;
    bottom: 32px;
    width: 772px;
    padding: 48px;
    border: 2px solid #e2e3e5;
    border-radius: 12px;
    background: #fff;
    box-shadow: 0 16px 32px rgba(0, 0, 0, 0.1);
    color: #3c434e;
    z-index: 2;
}

.toast-title {
    margin-bottom: 8px;
    color: #25272c;
    font-weight: 600;
}

/* shade the dock throws over the window */
.dock-shade {
    position: absolute;
    left: 400px;
    right: 300px;
    bottom: 0;
    height: 90px;
    background: linear-gradient(transparent, rgba(0, 0, 0, 0.13));
    mask-image: linear-gradient(90deg, transparent, #000 10%, #000 85%, transparent);
    z-index: 3;
    pointer-events: none;
}

/* Dock */
.dock-area {
    height: 122px;
    flex: none;
    display: flex;
    justify-content: center;
    align-items: flex-start;
    padding-top: 2px;
}

.dock {
    height: 109px;
    display: flex;
    gap: 22px;
    padding: 14px 16px;
    border: 2px solid #38393d;
    border-radius: 36px;
    background: #11131a;
}

.app {
    position: relative;
    width: 70px;
    height: 72px;
}

.app svg {
    display: block;
    width: 70px;
    height: 72px;
    overflow: visible;
}

.app.running::after {
    content: "";
    position: absolute;
    left: 31px;
    bottom: -18px;
    width: 8px;
    height: 8px;
    border-radius: 50%;
    background: #8f9093;
}

.app-badge {
    position: absolute;
    top: -8px;
    right: -11px;
    min-width: 34px;
    padding: 0 3px;
    border-radius: 17px;
    background: #dc4a36;
    color: #fff;
    font-size: 20px;
    line-height: 34px;
    text-align: center;
}

.letter-app {
    border-radius: 16px;
    background: #000;
    color: #fff;
    font-size: 40px;
    font-weight: 500;
    line-height: 72px;
    text-align: center;
}

.cal-month {
    fill: #fff;
    font-size: 15px;
    font-weight: 600;
    text-anchor: middle;
}

.cal-day {
    fill: #222;
    font-size: 42px;
    font-weight: 300;
    text-anchor: middle;
}

.dock-sep {
    width: 2px;
    height: 82px;
    margin: -2px 8px 0;
    background: #48494d;
}

.trash svg {
    height: 82px;
    margin-top: -6px;
}

.watermark {
    position: absolute;
    left: 0;
    right: 0;
    bottom: 46px;
    display: flex;
    flex-direction: column;
    align-items: center;
    color: rgba(190, 193, 193, 0.4);
    font-weight: 600;
    pointer-events: none;
    z-index: 4;
}

.watermark span {
    font-family: "DejaVu Sans", sans-serif;
    font-size: 116px;
    line-height: 116px;
    font-weight: 700;
}

.watermark small {
    font-size: 62px;
    line-height: 62px;
}

.pointer {
    position: absolute;
    left: 697px;
    top: 803px;
    width: 20px;
    height: 34px;
    z-index: 4;
}
```
